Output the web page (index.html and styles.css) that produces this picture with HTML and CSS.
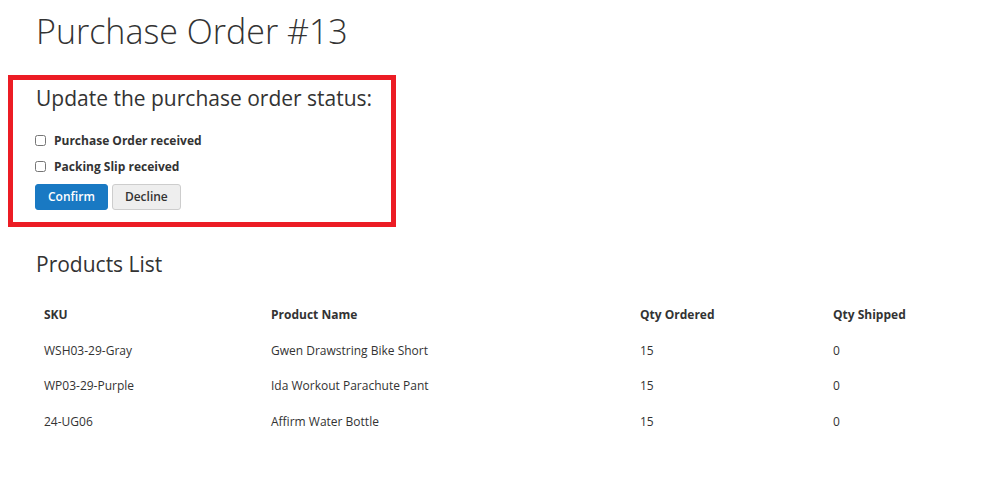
FILE: index.html
```html
<!DOCTYPE html>
<html>
<head>
<meta charset="utf-8">
<link rel="stylesheet" href="styles.css">
</head>
<body>
<main class="page">
  <h1 class="page-title">Purchase Order #13</h1>
  <section class="status-box">
    <h2 class="status-title">Update the purchase order status:</h2>
    <label class="check-row"><input type="checkbox" class="check"><span>Purchase Order received</span></label>
    <label class="check-row"><input type="checkbox" class="check"><span>Packing Slip received</span></label>
    <div class="actions">
      <button class="btn btn-primary">Confirm</button>
      <button class="btn btn-secondary">Decline</button>
    </div>
  </section>
  <h2 class="section-title">Products List</h2>
  <table class="products">
    <colgroup>
      <col class="c-sku"><col class="c-name"><col class="c-qo"><col class="c-qs">
    </colgroup>
    <thead>
      <tr><th>SKU</th><th>Product Name</th><th>Qty Ordered</th><th>Qty Shipped</th></tr>
    </thead>
    <tbody>
      <tr><td>WSH03-29-Gray</td><td>Gwen Drawstring Bike Short</td><td>15</td><td>0</td></tr>
      <tr><td>WP03-29-Purple</td><td>Ida Workout Parachute Pant</td><td>15</td><td>0</td></tr>
      <tr><td>24-UG06</td><td>Affirm Water Bottle</td><td>15</td><td>0</td></tr>
    </tbody>
  </table>
</main>
</body>
</html>
```

FILE: styles.css
```css
* { box-sizing: border-box; }
html, body { margin: 0; padding: 0; background: #fff; }
body {
  font-family: "Open Sans", "Liberation Sans", sans-serif;
  font-size: 12px;
  color: #333;
}
.page {
  padding: 11px 36px 0 36px;
}
.page-title {
  margin: 0;
  font-size: 34px;
  font-weight: 300;
  line-height: 40px;
}
.status-box {
  margin: 24px 0 0 -28px;
  width: 388px;
  height: 152px;
  border: 5px solid #ec1c24;
  padding: 5px 0 0 23px;
}
.status-title {
  margin: 0;
  font-size: 21px;
  font-weight: 400;
  line-height: 26px;
  white-space: nowrap;
}
.check-row {
  display: flex;
  align-items: center;
  gap: 8px;
  height: 26px;
  font-weight: 700;
  font-size: 12px;
}
.status-title + .check-row { margin-top: 16px; }
.check {
  margin: 0 0 0 -1px;
  width: 11px;
  height: 11px;
}
.actions {
  display: flex;
  gap: 4px;
  margin-top: 5px;
  margin-left: -1px;
}
.btn {
  font-family: inherit;
  font-size: 12px;
  font-weight: 600;
  line-height: 16px;
  padding: 4px 12px;
  border-radius: 3px;
  cursor: pointer;
}
.btn-primary {
  background: #1979c3;
  border: 1px solid #1979c3;
  color: #fff;
}
.btn-secondary {
  background: #eee;
  border: 1px solid #cdcdcd;
  color: #333;
}
.section-title {
  margin: 25px 0 0;
  font-size: 21px;
  font-weight: 400;
  line-height: 24px;
}
.products {
  margin-top: 21px;
  width: 928px;
  border-collapse: collapse;
}
.c-sku { width: 227px; }
.c-name { width: 369px; }
.c-qo { width: 193px; }
.products th, .products td {
  text-align: left;
  padding: 8px;
  line-height: 19.5px;
  font-size: 12px;
  vertical-align: top;
}
.products th { font-weight: 700; }
.products td { font-weight: 400; }
```
